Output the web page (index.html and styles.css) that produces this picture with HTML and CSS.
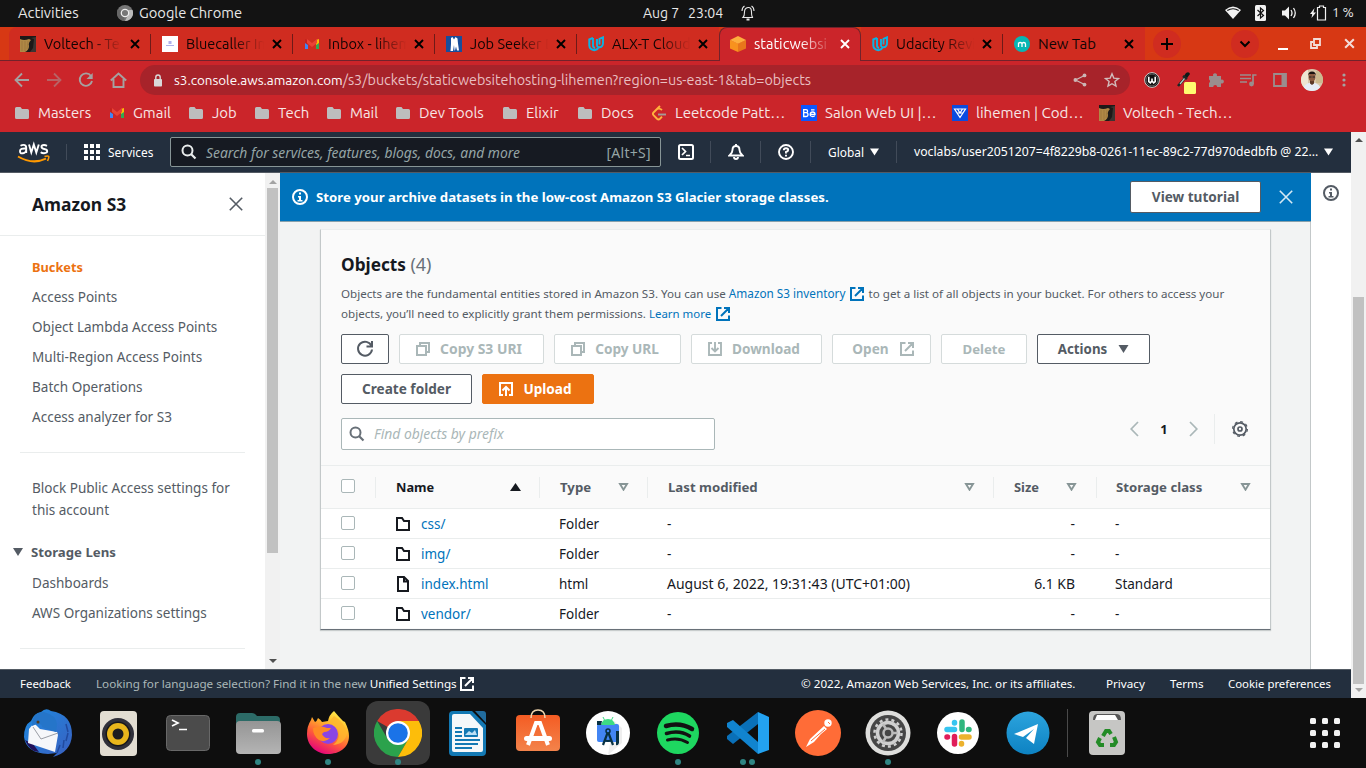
FILE: index.html
```
<!DOCTYPE html>
<html lang="en">
<head>
<meta charset="utf-8">
<title>staticwebsitehosting-lihemen - S3 bucket</title>
<link rel="stylesheet" href="styles.css">
</head>
<body>
<svg class="defs" aria-hidden="true">
  <symbol id="folder" viewBox="0 0 14 14"><path d="M0 2.500Q0 1 1.500 1H5.500L7 3H12.500Q14 3 14 4.500V11.500Q14 13 12.500 13H1.500Q0 13 0 11.500Z" fill="#bdbdbd"/></symbol>
  <symbol id="gmail" viewBox="0 0 16 16"><path d="M1 4v9h3V7z" fill="#4285f4"/><path d="M15 4v9h-3V7z" fill="#34a853"/><path d="M12 4l3-1v4l-3 2z" fill="#fbbc04"/><path d="M1 3l3 1v5L1 7z" fill="#c5221f"/><path d="M3 3l5 4 5-4v4l-5 4-5-4z" fill="#ea4335"/></symbol>
  <symbol id="udacity" viewBox="0 0 16 16"><path d="M5 1.800L1.300 3.500V9.500q.2 4 5 4.800 3-.6 4-2.300" fill="none" stroke="#0cb3e3" stroke-width="2"/><path d="M5 2v7.500q0 2 2 2.500M9 3v6q0 2.500 2.700 2.200Q15 10.800 15 7V1.300L11.500 2.800V8.500" fill="none" stroke="#0cb3e3" stroke-width="1.900"/></symbol>
  <symbol id="volt" viewBox="0 0 16 16"><path d="M0 0h16v16H0z" fill="#1d1918"/><path d="M0 3q4 2 9 0l2 1q-3 3-2 6 0 4-4 6H0z" fill="#b08845"/><path d="M2 5v10M5 5v10M8 5l-1 8" stroke="#94713a" stroke-width=".6"/><path d="M11 2l3 1-1 9-3 4h6V1z" fill="#3b3431"/></symbol>
  <symbol id="x" viewBox="0 0 12 12"><path d="M2 2l8 8M10 2l-8 8" fill="none" stroke="currentColor" stroke-width="1.900"/></symbol>
  <symbol id="bigx" viewBox="0 0 14 14"><path d="M.8.8l12.400 12.400M13.200.8L.8 13.200" fill="none" stroke="currentColor" stroke-width="1.600"/></symbol>
  <symbol id="ext" viewBox="0 0 14 14"><path d="M5.500 1H1v12h12V8.500M8 1h5v5M13 1L5 9" fill="none" stroke="currentColor" stroke-width="2"/></symbol>
  <symbol id="mag" viewBox="0 0 16 16"><circle cx="6.500" cy="6.500" r="5" fill="none" stroke="currentColor" stroke-width="2"/><path d="M10 10l4.500 4.500" stroke="currentColor" stroke-width="2.200"/></symbol>
  <symbol id="info" viewBox="0 0 16 16"><circle cx="8" cy="8" r="7" fill="none" stroke="currentColor" stroke-width="2"/><path d="M7 3.500h2v2H7zM6 7h3v4h1.500v1.500h-5V11H7V8.500H6z" fill="currentColor"/></symbol>
  <symbol id="copy" viewBox="0 0 14 14"><path d="M1 4h9v9H1zM4 4V1h9v9h-3" fill="none" stroke="currentColor" stroke-width="2"/></symbol>
  <symbol id="down" viewBox="0 0 10 8"><path d="M0 0h10L5 8z" fill="currentColor"/></symbol>
  <symbol id="sort" viewBox="0 0 10 8"><path d="M1.500 1h7L5 6.700z" fill="none" stroke="currentColor" stroke-width="1.900"/></symbol>
  <symbol id="dir" viewBox="0 0 14 14"><path d="M1 1h5l2 3h5v9H1z" fill="none" stroke="#16191f" stroke-width="2"/></symbol>
  <symbol id="file" viewBox="0 0 14 16"><path d="M2 1h6l4 4v10H2zM8 1v4.500h4" fill="none" stroke="#16191f" stroke-width="2"/></symbol>
</svg>

<header class="desk">
  <div class="desk-left"><span class="activities">Activities</span>
    <svg width="16" height="16" viewBox="0 0 16 16"><circle cx="8" cy="8" r="8" fill="#777"/><path d="M8 8L1 4A8 8 0 0 0 7 16z" fill="#666"/><path d="M8 5h7.500A8 8 0 0 1 8 16l3-6z" fill="#bbb"/><circle cx="8" cy="8" r="3.700" fill="#777" stroke="#eee" stroke-width="1.300"/></svg>
    <span class="appname">Google Chrome</span></div>
  <div class="clock"><span class="day">Aug 7</span><span>23:04</span>
    <svg width="14" height="16" viewBox="0 0 14 16" fill="none" stroke="#e8e8e8" stroke-width="1.100"><path d="M2 12.500Q3.500 11 3.500 7T7 2.500 10.500 7t1.500 5.500zM1 6Q1 2.500 3.500 1M13 6Q13 2.500 10.500 1"/><path d="M5.500 14.500h3" stroke-width="2"/></svg></div>
  <div class="tray">
    <svg width="16" height="14" viewBox="0 0 16 14"><path d="M0 4Q8-3 16 4L8 13z" fill="#f2f2f2"/><path d="M2.300 4.500Q8 1 13.700 4.500" fill="none" stroke="#131313" stroke-width="1.200"/></svg>
    <svg width="11" height="16" viewBox="0 0 11 16"><rect width="11" height="16" rx="1.500" fill="#f2f2f2"/><path d="M2.500 5l6 5.500-3 2.500V3l3 2.500-6 5.500" fill="none" stroke="#131313" stroke-width="1.200"/></svg>
    <svg width="15" height="14" viewBox="0 0 15 14"><path d="M0 4.500h3L7 .5v13l-4-4H0z" fill="#f2f2f2"/><path d="M9 4q2 3 0 6M11.500 2q3.500 5 0 10" fill="none" stroke="#f2f2f2" stroke-width="1.300"/></svg>
    <svg width="17" height="16" viewBox="0 0 17 16"><path d="M4.500 3L0 9h2.200L1.500 13 6 7.500H3.500z" fill="#f2f2f2"/><path d="M9.500 2.500V1h4v1.500h2v12.500h-8V2.500z" fill="none" stroke="#f2f2f2" stroke-width="1.200"/></svg>
    <span class="pct">1 %</span></div>
</header>

<div class="tabs">
  <div class="tab"><svg><use href="#volt"/></svg><span>Voltech - Te</span><svg class="close"><use href="#x"/></svg></div>
  <div class="tab"><svg viewBox="0 0 16 16"><path d="M0 0h16v16H0z" fill="#fff"/><path d="M6.500 5h3v3h-3zM4 9h8v1H4z" fill="#b0b0ea"/></svg><span>Bluecaller In</span><svg class="close"><use href="#x"/></svg></div>
  <div class="tab"><svg><use href="#gmail"/></svg><span>Inbox - lihem</span><svg class="close"><use href="#x"/></svg></div>
  <div class="tab"><svg viewBox="0 0 16 16"><path d="M0 0h16v16H0z" fill="#174d9b"/><path d="M5 2l1.500-1L8 3.500 9.500 1l2 1.500.5 5 1 7h-2l-1-4-1 4H8.500L8 9l-1 6H4.500l.5-7z" fill="#fff"/></svg><span>Job Seeker D</span><svg class="close"><use href="#x"/></svg></div>
  <div class="tab last"><svg><use href="#udacity"/></svg><span>ALX-T Cloud</span><svg class="close"><use href="#x"/></svg></div>
  <div class="tab active"><svg viewBox="0 0 16 16"><path d="M0 4l8 3.500V16l-8-3.500z" fill="#f8921e"/><path d="M16 4L8 7.500V16l8-3.500z" fill="#e8761b"/><path d="M8 0l8 4-8 3.800L0 4z" fill="#fdae3d"/></svg><span>staticwebsi</span><svg class="close"><use href="#x"/></svg></div>
  <div class="tab"><svg><use href="#udacity"/></svg><span>Udacity Revi</span><svg class="close"><use href="#x"/></svg></div>
  <div class="tab last short"><svg viewBox="0 0 16 16"><circle cx="8" cy="8" r="8" fill="#08b6b4"/><path d="M4.500 11V6.500M4.500 8q0-1.500 1.700-1.500T8 8v3M8 8q0-1.500 1.700-1.500T11.500 8v3" fill="none" stroke="#fff" stroke-width="1.300"/></svg><span>New Tab</span><svg class="close"><use href="#x"/></svg></div>
  <div class="round plus"><svg width="14" height="14" viewBox="0 0 14 14"><path d="M7 1v12M1 7h12" stroke="#000" stroke-width="1.900"/></svg></div>
  <div class="round chev"><svg width="12" height="8" viewBox="0 0 12 8"><path d="M1.500 1.500L6 6l4.500-4.500" fill="none" stroke="#000" stroke-width="2"/></svg></div>
  <div class="wm">
    <svg width="10" height="12" viewBox="0 0 10 12"><path d="M0 11h10" stroke="#fff" stroke-width="2"/></svg>
    <svg width="11" height="11" viewBox="0 0 11 11"><path d="M4 1h6v6H4zM3 4H1v6h6V8" fill="none" stroke="#f4dcd8" stroke-width="1.800"/></svg>
    <svg width="13" height="13"><use href="#x"/></svg></div>
</div>

<div class="toolbar">
  <div class="cell"><svg width="16" height="16" viewBox="0 0 16 16" fill="none" stroke="#a5a1a1" stroke-width="1.800"><path d="M15 8H2M8 1.500L1.500 8 8 14.500"/></svg></div>
  <div class="cell dim"><svg width="16" height="16" viewBox="0 0 16 16" fill="none" stroke="#a5a1a1" stroke-width="1.800"><path d="M1 8h13M8 1.500L14.500 8 8 14.500"/></svg></div>
  <div class="cell"><svg width="16" height="16" viewBox="0 0 16 16"><path d="M13 4A6.200 6.200 0 1 0 14 9" fill="none" stroke="#a5a1a1" stroke-width="1.900"/><path d="M14.700 1v6H8.500z" fill="#a5a1a1"/></svg></div>
  <div class="cell"><svg width="17" height="16" viewBox="0 0 17 16" fill="none" stroke="#a5a1a1" stroke-width="1.900"><path d="M.8 8.500L8.500 1.500 16.200 8.500M3.500 7v8h10V7"/></svg></div>
  <div class="omni">
    <svg width="10" height="13" viewBox="0 0 10 13"><rect x="1" y="5" width="8" height="7.500" rx=".8" fill="#d9d9d9"/><path d="M2.800 5V3.200a2.200 2.200 0 0 1 4.400 0V5" fill="none" stroke="#d9d9d9" stroke-width="1.400"/></svg>
    <span class="host">s3.console.aws.amazon.com</span><span class="path">/s3/buckets/staticwebsitehosting-lihemen?region=us-east-1&amp;tab=objects</span>
    <svg class="share" width="14" height="14" viewBox="0 0 14 14"><path d="M11.500 2.500L2.500 7l9 4.500" fill="none" stroke="#ccb5b5" stroke-width="1.300"/><g fill="#ccb5b5"><circle cx="11.500" cy="2.400" r="1.900"/><circle cx="2.400" cy="7" r="1.900"/><circle cx="11.500" cy="11.600" r="1.900"/></g></svg>
    <svg width="16" height="16" viewBox="0 0 16 16"><path d="M8 1.800l1.800 4.300 4.700.4-3.600 3 1.100 4.600L8 11.700l-4 2.400 1.100-4.600-3.600-3 4.700-.4z" fill="none" stroke="#d2bcbc" stroke-width="1.400"/></svg>
  </div>
  <div class="cell"><svg width="16" height="16" viewBox="0 0 16 16"><circle cx="8" cy="8" r="7.400" fill="#111" stroke="#ddd" stroke-width=".9"/><circle cx="8" cy="8" r="5.900" fill="none" stroke="#888" stroke-width=".6"/><path d="M4.800 4.800v4.700l1.600 1.300L8 9V6.500 9l1.600 1.800 1.600-1.300V4.800" fill="none" stroke="#fff" stroke-width="1.600"/></svg></div>
  <div class="cell"><svg class="dropper" width="20" height="24" viewBox="0 0 20 24"><path d="M10 1q3-2 4 1l-3 4-3-2z" fill="#0d1a18"/><path d="M7 4l4 3M9 6l-7 8" stroke="#1c2624" stroke-width="2.600"/><path d="M8.500 6.500L4 12" stroke="#b4c7c1" stroke-width="1.200"/><rect x="8" y="10" width="12" height="12" rx="1.500" fill="#fffa70"/></svg></div>
  <div class="cell"><svg width="16" height="16" viewBox="0 0 16 16"><path d="M1 4h4.200a2 2 0 1 1 3.600 0H13v3.700a2 2 0 1 1 0 3.600V15H9.200a2 2 0 0 0-4 0H1v-4a2 2 0 0 0 0-3.500z" fill="#9a8d8d"/></svg></div>
  <div class="cell"><svg width="17" height="14" viewBox="0 0 17 14"><path d="M0 2h11M0 5.500h11M0 9h7" stroke="#9a8d8d" stroke-width="1.700"/><path d="M13 11V2h3.500" fill="none" stroke="#9a8d8d" stroke-width="1.700"/><circle cx="11.500" cy="11" r="2.400" fill="#9a8d8d"/></svg></div>
  <div class="cell"><svg width="14" height="14" viewBox="0 0 14 14"><path d="M1 1h12v12H1z" fill="none" stroke="#9a8d8d" stroke-width="1.800"/><path d="M8.500 1H13v12H8.500z" fill="#9a8d8d"/></svg></div>
  <div class="cell"><svg width="22" height="22" viewBox="0 0 22 22"><clipPath id="av"><circle cx="11" cy="11" r="11"/></clipPath><g clip-path="url(#av)"><path d="M0 0h22v22H0z" fill="#d8c6aa"/><path d="M0 0h7v22H0z" fill="#eee5d2"/><path d="M15 2h7v12h-7z" fill="#cbb98f"/><path d="M2 22q0-8 9-8.500 9 .5 9 8.500z" fill="#e6edf8"/><path d="M9 11h4v3.500l-2 1.500-2-1.500z" fill="#5c3828"/><ellipse cx="11" cy="8" rx="3.400" ry="4.300" fill="#8a5a40"/><path d="M7 7q0-4.500 4-4.500t4 4.500l-1-2H8z" fill="#181210"/><path d="M8 8h2.500M11.500 8H14" stroke="#222" stroke-width="1"/></g></svg></div>
  <div class="cell"><svg width="4" height="16" viewBox="0 0 4 16" fill="#a5a1a1"><circle cx="2" cy="3" r="1.600"/><circle cx="2" cy="8" r="1.600"/><circle cx="2" cy="13" r="1.600"/></svg></div>
</div>

<nav class="marks">
  <a><svg><use href="#folder"/></svg>Masters</a>
  <a><svg><use href="#gmail"/></svg>Gmail</a>
  <a><svg><use href="#folder"/></svg>Job</a>
  <a><svg><use href="#folder"/></svg>Tech</a>
  <a><svg><use href="#folder"/></svg>Mail</a>
  <a><svg><use href="#folder"/></svg>Dev Tools</a>
  <a><svg><use href="#folder"/></svg>Elixir</a>
  <a><svg><use href="#folder"/></svg>Docs</a>
  <a class="wide"><svg viewBox="0 0 16 16" fill="none" stroke-width="1.900"><path d="M9 1L2.500 7.500q-1.200 1.300 0 2.600L6 13.700q1.500 1.400 3 0l2-2M5.500 4.500Q8 2.500 11 5" stroke="#ffb13d"/><path d="M7 9.500h8" stroke="#a49a96"/></svg>Leetcode Patt…</a>
  <a class="wide"><svg viewBox="0 0 16 16"><path d="M0 0h16v16H0z" fill="#0a57ff"/><path d="M2.700 4.700H5q1.600 0 1.600 1.500T5 7.700H2.700 5q2 0 2 1.900t-2 1.900H2.700zM9 9.300h5q0-2.300-2.300-2.300T9.200 9.200t2.500 2.300q1.600 0 2.200-1M10 4.900h3.500" fill="none" stroke="#fff" stroke-width="1.300"/></svg>Salon Web UI |…</a>
  <a class="wide"><svg viewBox="0 0 16 16"><path d="M0 0h16v16H0z" fill="#0b4be0"/><path d="M2.500 4h11L8 12.500zM5.500 4L8 8l2.500-4M5 8h6" fill="none" stroke="#fff" stroke-width="1.200"/></svg>lihemen | Cod…</a>
  <a class="wide"><svg><use href="#volt"/></svg>Voltech - Tech…</a>
</nav>

<div class="page">
  <div class="console">
    <header class="nav">
      <svg class="aws" width="34" height="24" viewBox="0 0 34 24"><g fill="none" stroke="#fff" stroke-width="1.900"><path d="M3.500 4.800q1.500-.9 3-.9 2.700 0 2.700 2.600V12M9 7.500Q3 7 3 10t2.800 2.200Q8.200 12.200 9 10"/><path d="M12 3.500L14.300 11.500l2.500-8 2.500 8 2.500-8"/><path d="M30 4.800q-1.500-.8-3-.8-2.500 0-2.500 1.800t2.700 2.200q3 .5 3 2.200T27 12.200q-2 0-3.300-1"/></g><path d="M1 15.500q14.500 8.500 28 2.200" fill="none" stroke="#f90" stroke-width="2"/><path d="M27.500 15.500q3.700-.8 4.200 0t-1.200 4.500" fill="none" stroke="#f90" stroke-width="1.600"/></svg>
      <svg class="services-icon" width="16" height="16" viewBox="0 0 16 16" fill="#fff"><path d="M0 0h4v4H0zM6 0h4v4H6zM12 0h4v4h-4zM0 6h4v4H0zM6 6h4v4H6zM12 6h4v4h-4zM0 12h4v4H0zM6 12h4v4H6zM12 12h4v4h-4z"/></svg>
      <span class="services">Services</span>
      <div class="search"><svg width="16" height="16"><use href="#mag"/></svg><i>Search for services, features, blogs, docs, and more</i><span>[Alt+S]</span></div>
      <div class="ncell"><svg width="16" height="16" viewBox="0 0 16 16" fill="none" stroke="#fff" stroke-width="2"><rect x="1" y="1" width="14" height="14" rx="1.500"/><path d="M4 4l3.500 3.500L4 11M8 11.500h4" stroke-width="1.700"/></svg></div>
      <div class="ncell"><svg width="16" height="16" viewBox="0 0 16 16" fill="none" stroke="#fff" stroke-width="1.900"><path d="M1.500 11.500Q4.500 9 4.500 6 4.500 2 8 2t3.500 4q0 3 3 5.500zM8 0v2"/><path d="M6 13q0 2 2 2t2-2"/></svg></div>
      <div class="ncell"><svg width="16" height="16" viewBox="0 0 16 16" fill="none" stroke="#fff" stroke-width="1.900"><circle cx="8" cy="8" r="7"/><path d="M5.800 6.300Q5.800 4.200 8 4.200t2.200 1.900Q10.200 7.300 8 8v1.500M8 10.700v1.800"/></svg></div>
      <div class="global"><span>Global</span><svg width="9" height="8"><use href="#down"/></svg></div>
      <div class="account"><span>voclabs/user2051207=4f8229b8-0261-11ec-89c2-77d970dedbfb @ 22...</span><svg width="9" height="8"><use href="#down"/></svg></div>
    </header>

    <div class="work">
      <aside class="side">
        <div class="side-body">
          <div class="side-title"><h2>Amazon S3</h2><svg width="14" height="14"><use href="#bigx"/></svg></div>
          <ul class="links">
            <li class="on">Buckets</li><li>Access Points</li><li>Object Lambda Access Points</li><li>Multi-Region Access Points</li><li>Batch Operations</li><li>Access analyzer for S3</li>
          </ul>
          <div class="block">Block Public Access settings for<br>this account</div>
          <div class="lens"><svg width="10" height="8"><use href="#down"/></svg>Storage Lens</div>
          <ul class="sub"><li>Dashboards</li><li>AWS Organizations settings</li></ul>
          <div class="rule"></div>
        </div>
        <div class="sbar"><svg width="8" height="4" viewBox="0 0 8 4"><path d="M0 4l4-4 4 4z" fill="#a3a3a3"/></svg><div class="thumb"></div><svg width="8" height="4" viewBox="0 0 8 4"><path d="M0 0h8L4 4z" fill="#505050"/></svg></div>
      </aside>

      <main class="main">
        <div class="banner"><svg width="16" height="16"><use href="#info"/></svg><b>Store your archive datasets in the low-cost Amazon S3 Glacier storage classes.</b><span class="btn tutorial">View tutorial</span><svg class="bx" width="14" height="14"><use href="#bigx"/></svg></div>
        <section class="card">
          <div class="card-head">
            <h1>Objects <span>(4)</span></h1>
            <p>Objects are the fundamental entities stored in Amazon S3. You can use <a>Amazon S3 inventory <svg width="14" height="14"><use href="#ext"/></svg></a> to get a list of all objects in your bucket. For others to access your<br>objects, you’ll need to explicitly grant them permissions. <a class="more">Learn more <svg width="14" height="14"><use href="#ext"/></svg></a></p>
            <div class="btns">
              <span class="btn w48"><svg width="18" height="18" viewBox="0 0 18 18"><path d="M15.500 6A7 7 0 1 0 16 9.500" fill="none" stroke="#545b64" stroke-width="2"/><path d="M16 1v5.500h-5.500" fill="none" stroke="#545b64" stroke-width="2"/></svg></span>
              <span class="btn off ico w145 wider"><svg width="14" height="14"><use href="#copy"/></svg>Copy S3 URI</span>
              <span class="btn off ico w127"><svg width="14" height="14"><use href="#copy"/></svg>Copy URL</span>
              <span class="btn off ico w131"><svg width="14" height="14" viewBox="0 0 14 14"><path d="M4 1H1v12h12V1h-3M7 0v9M3.500 6L7 9.500 10.500 6" fill="none" stroke="currentColor" stroke-width="1.900"/></svg>Download</span>
              <span class="btn off w99 open">Open<svg width="14" height="14"><use href="#ext"/></svg></span>
              <span class="btn off w86">Delete</span>
              <span class="btn w113 open">Actions<svg width="11" height="8"><use href="#down"/></svg></span>
              <span class="btn w131">Create folder</span>
              <span class="btn ico up w112"><svg width="14" height="14" viewBox="0 0 14 14"><path d="M4 13H1V1h12v12h-3M7 14V5M3.500 8.500L7 5l3.500 3.500" fill="none" stroke="#fff" stroke-width="2"/></svg>Upload</span>
            </div>
            <div class="filter">
              <div class="find"><svg width="16" height="16"><use href="#mag"/></svg><i>Find objects by prefix</i></div>
              <div class="pager">
                <svg width="9" height="16" viewBox="0 0 9 16"><path d="M8 1L1.200 8 8 15" fill="none" stroke="#aab7b8" stroke-width="1.700"/></svg><b>1</b>
                <svg width="9" height="16" viewBox="0 0 9 16"><path d="M1 1l6.800 7L1 15" fill="none" stroke="#aab7b8" stroke-width="1.700"/></svg>
                <span class="gear"><svg width="16" height="16" viewBox="0 0 16 16" fill="none" stroke="#545b64"><circle cx="8" cy="8" r="6.200" stroke-width="1.700"/><circle cx="8" cy="8" r="7.400" stroke-width="1.200" stroke-dasharray="2.900 2.911"/><circle cx="8" cy="8" r="2" stroke-width="1.700"/></svg></span>
              </div>
            </div>
          </div>
          <div class="row head"><div class="c0"><i class="box"></i></div><div class="sorted">Name<svg width="11" height="8" viewBox="0 0 11 8"><path d="M0 8h11L5.500 0z" fill="#16191f"/></svg></div><div>Type<svg><use href="#sort"/></svg></div><div>Last modified<svg><use href="#sort"/></svg></div><div class="sz">Size<svg><use href="#sort"/></svg></div><div class="st">Storage class<svg><use href="#sort"/></svg></div></div>
          <div class="row"><div class="c0"><i class="box"></i></div><div><svg><use href="#dir"/></svg><a>css/</a></div><div class="d">Folder</div><div class="d">-</div><div class="r">-</div><div class="s">-</div></div>
          <div class="row"><div class="c0"><i class="box"></i></div><div><svg><use href="#dir"/></svg><a>img/</a></div><div class="d">Folder</div><div class="d">-</div><div class="r">-</div><div class="s">-</div></div>
          <div class="row"><div class="c0"><i class="box"></i></div><div><svg class="tall"><use href="#file"/></svg><a>index.html</a></div><div class="d">html</div><div class="d date">August 6, 2022, 19:31:43 (UTC+01:00)</div><div class="r">6.1 KB</div><div class="s">Standard</div></div>
          <div class="row"><div class="c0"><i class="box"></i></div><div><svg><use href="#dir"/></svg><a>vendor/</a></div><div class="d">Folder</div><div class="d">-</div><div class="r">-</div><div class="s">-</div></div>
        </section>
      </main>
      <div class="help"><svg width="16" height="16"><use href="#info"/></svg></div>
    </div>

    <footer class="foot">
      <span class="fb">Feedback</span><span class="lang">Looking for language selection? Find it in the new <em>Unified Settings</em></span><svg width="14" height="14"><use href="#ext"/></svg>
      <span class="copyr">© 2022, Amazon Web Services, Inc. or its affiliates.</span><span class="pv">Privacy</span><span class="tm">Terms</span><span>Cookie preferences</span>
    </footer>
  </div>
  <div class="sbar pagebar"><svg width="8" height="4" viewBox="0 0 8 4"><path d="M0 4l4-4 4 4z" fill="#505050"/></svg><div class="thumb"></div><svg width="8" height="4" viewBox="0 0 8 4"><path d="M0 0h8L4 4z" fill="#a3a3a3"/></svg></div>
</div>

<div class="dock">
  <div class="app"><svg viewBox="0 0 48 48"><defs><linearGradient id="tb" x1="0" y1="0" x2="1" y2="1"><stop offset="0" stop-color="#1d8ae0"/><stop offset="1" stop-color="#3a5fc0"/></linearGradient></defs><path d="M17 3Q22-2 27 2q21 3 21 24-1 17-19 22l4-4-9 1Q2 44 0 28q0-12 7-16Q10 4 17 3z" fill="url(#tb)"/><path d="M1 31q5 12 14 12l-6-8z" fill="#21115a"/><path d="M5 20l5-6 6 6 17 3 1 3-3 17L4 34z" fill="#f6f7fa"/><path d="M9 18l8 12 17-6" fill="none" stroke="#9a9da5" stroke-width="1"/><path d="M8 15Q9 3 20 3q12 3 13 12l-1 8-14-5q0-3-3-3t-7 2z" fill="#2575c9"/><circle cx="14" cy="13" r="1.500" fill="#523c20"/><path d="M42 15l2 8M44 24l-2 8M40 31l-1 8M36 36l-3 8" fill="none" stroke="#214a9e" stroke-width="1.500"/></svg></div>
  <div class="app"><svg viewBox="0 0 48 48"><rect x="6" y="2" width="37" height="45" rx="4" fill="#e2ddd2"/><circle cx="24" cy="25" r="16" fill="#30303a"/><circle cx="24" cy="25" r="12.500" fill="#17171b"/><circle cx="24" cy="25" r="11" fill="#e9b61c"/><circle cx="24" cy="25" r="5.500" fill="#1d1d1f"/></svg></div>
  <div class="app"><svg viewBox="0 0 48 48"><rect x="2.500" y="6.500" width="43" height="35" rx="4" fill="#4b4b4b" stroke="#686868"/><path d="M8 11l6 3-6 3M15 20.500h8" fill="none" stroke="#fff" stroke-width="1.700"/></svg></div>
  <div class="app"><svg viewBox="0 0 48 48"><defs><linearGradient id="fg" x1="0" y1="0" x2="0" y2="1"><stop offset="0" stop-color="#959595"/><stop offset="1" stop-color="#b4b4b4"/></linearGradient></defs><path d="M2 8q0-4 4-4h12q3 0 5 3h19q4 0 4 4v10H2z" fill="#2c6b67"/><rect x="2" y="12" width="45" height="33" rx="4" fill="url(#fg)"/><rect x="18" y="20" width="12" height="3.500" rx="1.500" fill="#fff"/></svg><i class="dot"></i></div>
  <div class="app"><svg viewBox="0 0 48 48"><defs><linearGradient id="ff" x1=".8" y1="0" x2=".3" y2="1"><stop offset="0" stop-color="#fff44f"/><stop offset=".35" stop-color="#ffb52a"/><stop offset=".65" stop-color="#ff5b3a"/><stop offset="1" stop-color="#e3007e"/></linearGradient></defs><path d="M30 2q4 5 9 10l2 1q4 8 4 14c0 12-10 18-21 18S3 37 3 25q0-8 4-14l1-3 3 5q2-1 3-4 3 2 4 4l6-1q1-6 6-10z" fill="url(#ff)"/><circle cx="24" cy="25" r="10" fill="#8a45e5"/><path d="M9 19q8-3 14 0h4q-2 4-7 4l-2 2q2 5 8 4-5 5-11 2-6-4-6-12z" fill="#ff8a25"/><path d="M24 14q10 1 11 9 1 8-6 13 13-1 14-13Q39 12 30 7z" fill="#ffb62d" opacity=".8"/></svg><i class="dot"></i></div>
  <div class="app sel"><svg viewBox="0 0 48 48"><path d="M24 24L3.200 12A24 24 0 0 1 44.800 12z" fill="#db3a2f"/><path d="M3.200 12A24 24 0 0 0 24 48l10.400-18H13.600z" fill="#2ba24c"/><path d="M44.800 12A24 24 0 0 1 24 48l10.400-18L34 12z" fill="#fdbd0a"/><path d="M24 12h20.800L36 24z" fill="#fdbd0a"/><circle cx="24" cy="24" r="12" fill="#fff"/><circle cx="24" cy="24" r="9.800" fill="#1a73e8"/></svg><i class="dot"></i></div>
  <div class="app"><svg viewBox="0 0 48 48"><path d="M9 2h19l14 14v27q0 4-4 4H9q-4 0-4-4V6q0-4 4-4z" fill="#1379b4"/><path d="M10 5h16l13 14v22q0 2-2 2H10q-2 0-2-2V7q0-2 2-2z" fill="#f5f8fa"/><path d="M31 2h8q3 0 3 3v9z" fill="#216c9e"/><path d="M11 19h7M11 23h7M11 27h7M11 31h25M11 35h23M11 39h17" stroke="#1379b4" stroke-width="2"/><rect x="20" y="19" width="14" height="9" rx="1" fill="#1379b4"/><path d="M21 26l4-4 3 2 3-3 2 5z" fill="#bce0f5"/></svg></div>
  <div class="app"><svg viewBox="0 0 48 48"><defs><linearGradient id="sw" x1="0" y1="0" x2="0" y2="1"><stop offset="0" stop-color="#f45c23"/><stop offset="1" stop-color="#f3834b"/></linearGradient></defs><rect x="2" y="6" width="44" height="36" rx="4" fill="url(#sw)"/><path d="M17 9q0-8 7-8t7 8" fill="none" stroke="#f2d6ae" stroke-width="1.500"/><path d="M14 36l8-22h4l8 22" fill="none" stroke="#fff" stroke-width="4"/><rect x="10" y="27" width="28" height="5" rx="2.500" fill="#fff"/></svg></div>
  <div class="app"><svg viewBox="0 0 48 48"><circle cx="24" cy="24" r="22" fill="#fff"/><path d="M24 46l14-12V19L30 12z" fill="#eee"/><rect x="13" y="15" width="22" height="18" rx="2" fill="#4285f4"/><path d="M17 16q1-6 7-6t7 6z" fill="#3ddc84"/><path d="M19 8l2 4M29 8l-2 4" stroke="#3ddc84" stroke-width="1"/><circle cx="24" cy="22" r="2" fill="none" stroke="#073042" stroke-width="1.500"/><path d="M23.500 24l-4.500 12M24.500 24l4.500 12M20 31q4 2 8 0" fill="none" stroke="#073042" stroke-width="2.200"/><path d="M32 22h3v12q-1 3-3 2zM13 12h5l-1 4h-4z" fill="#073042"/></svg></div>
  <div class="app"><svg viewBox="0 0 48 48"><circle cx="24" cy="24" r="21" fill="#1ed760"/><g fill="none" stroke="#121212" stroke-linecap="round"><path d="M12 17q14-4 26 3" stroke-width="4.500"/><path d="M12.500 24.500q13-4 23 2.500" stroke-width="3.600"/><path d="M13.500 31q11-3 20 2.500" stroke-width="3"/></g></svg><i class="dot"></i></div>
  <div class="app"><svg viewBox="0 0 48 48"><path d="M34 3l11 5v33l-11 4z" fill="#23a2f1"/><path d="M34 3v12L9 35l-6-5v-3z" fill="#0a70b8"/><path d="M3 14l6-3 25 22v12L3 18z" fill="#1184cf"/></svg><i class="dot"></i><i class="dot two"></i></div>
  <div class="app"><svg viewBox="0 0 48 48"><circle cx="24" cy="24" r="23" fill="#ff6c37"/><circle cx="34" cy="14" r="3.700" fill="#fff"/><path d="M30 17l3 3-6 5-7 8-8 5 4-8z" fill="#fff"/><path d="M31 20L17 32M34 13l2 2" stroke="#ff6c37" stroke-width="1"/></svg></div>
  <div class="app"><svg viewBox="0 0 48 48"><circle cx="24" cy="24" r="22.500" fill="#dededc"/><circle cx="24" cy="24" r="18" fill="#464646"/><circle cx="24" cy="24" r="10.500" fill="none" stroke="#cfcfcf" stroke-width="3.500"/><circle cx="24" cy="24" r="13.500" fill="none" stroke="#cfcfcf" stroke-width="2.500" stroke-dasharray="3 3.060"/><circle cx="24" cy="24" r="4.500" fill="none" stroke="#bbb" stroke-width="2.500"/><path d="M28 24h6M22 20l-3-5M22 28l-3 5" stroke="#bbb" stroke-width="2.500"/></svg><i class="dot"></i></div>
  <div class="app"><svg viewBox="0 0 48 48"><circle cx="24" cy="24" r="21" fill="#fff"/><g stroke-width="5.500" stroke-linecap="round"><path d="M13 20.500h7.500M20.500 13.500v.5" stroke="#36c5f0"/><path d="M28 13v7.500M34.500 20.500h.5" stroke="#2eb67d"/><path d="M27.500 28H35M27.500 34.500v.5" stroke="#ecb22e"/><path d="M20.500 27.500V35M13 28h.5" stroke="#e01e5a"/></g></svg></div>
  <div class="app"><svg viewBox="0 0 48 48"><defs><linearGradient id="tg" x1="0" y1="0" x2="0" y2="1"><stop offset="0" stop-color="#2ca4de"/><stop offset="1" stop-color="#0d82c2"/></linearGradient></defs><circle cx="24" cy="24" r="21.500" fill="url(#tg)"/><path d="M10 25l24-10-4 20-8-6 8-9-11 8z" fill="#fff"/></svg></div>
  <div class="dsep"></div>
  <div class="app"><svg viewBox="0 0 48 48"><rect x="6" y="2" width="36" height="44" rx="4" fill="#c6c6c4"/><path d="M10 11q0-6 4-6h20q4 0 4 6z" fill="#565656"/><path d="M12 11l2-5h18l3 5z" fill="#fff"/><g fill="none" stroke="#238b27" stroke-width="4"><path d="M20 27l3-5h3l2 3M31 28l2 5-2 3h-4M21 36h-4l-2-3 2-4"/></g></svg></div>
  <div class="grid9"><i></i><i></i><i></i><i></i><i></i><i></i><i></i><i></i><i></i></div>
</div>
</body>
</html>
```
FILE: styles.css
```
* { box-sizing: border-box; }
body { margin: 0; width: 1366px; height: 768px; overflow: hidden; display: flex; flex-direction: column; font-family: "Noto Sans", "Open Sans", sans-serif; font-size: 13.600px; line-height: 20px; color: #16191f; white-space: nowrap; }
svg { flex: none; display: block; }
.defs { display: none; }
h1, h2, p, ul { margin: 0; padding: 0; }
li { list-style: none; }

/* desktop bar */
.desk { height: 27px; background: #131313; color: #e8e8e8; display: grid; grid-template-columns: 643px 1fr auto; align-items: center; font-family: Ubuntu, "Noto Sans", sans-serif; font-size: 14.100px; }
.desk > div { display: flex; align-items: center; margin-top: -1px; }
.desk-left { padding-left: 18px; }
.activities { width: 99px; font-size: 14.800px; }
.appname { margin-left: 6px; font-size: 14.700px; }
.day { width: 45px; font-size: 14px; }
.clock svg { margin-left: 18px; }
.tray { padding-right: 13px; }
.tray svg:nth-child(2) { margin-left: 14px; }
.tray svg:nth-child(3) { margin-left: 16px; }
.tray svg:nth-child(4) { margin-left: 13px; }
.pct { margin-left: 5px; font-size: 13.400px; width: 21px; }

/* tab strip */
.tabs { height: 34px; background: #d73814; border-bottom: 1px solid #71222b; display: flex; padding-left: 9px; font-family: Ubuntu, "Noto Sans", sans-serif; font-size: 14.500px; color: #100404; }
.tab { width: 142px; height: 33px; background: #d02c20; padding-left: 11px; display: flex; align-items: center; position: relative; }
.tab:first-child { border-radius: 8px 0 0 0; }
.tab > svg { width: 16px; height: 16px; }
.tab > span { width: 80px; margin-left: 8px; overflow: hidden; -webkit-mask-image: linear-gradient(90deg, #000 58%, transparent 98%); mask-image: linear-gradient(90deg, #000 58%, transparent 98%); }
.tab.short > span { font-size: 14.900px; -webkit-mask-image: none; mask-image: none; }
.tab > .close { width: 12px; height: 12px; margin-left: 5px; color: #000; }
.tab::after { content: ""; position: absolute; right: 0; top: 7px; width: 1px; height: 20px; background: #6e1a18; }
.tab.last::after, .tab.active::after { display: none; }
.tab.active { height: 34px; background: #cb252a; color: #fff; border: 1px solid #71222b; border-bottom: 0; border-radius: 8px 8px 0 0; padding-left: 10px; padding-bottom: 1px; }
.tab.active .close { color: #fff; }
.round { width: 28px; height: 28px; margin-top: 3px; border-radius: 50%; background: #d02c20; display: flex; align-items: center; justify-content: center; }
.plus { margin-left: 8px; }
.chev { margin-left: 50px; }
.wm { display: flex; align-items: center; margin-left: 19px; color: #f4dcd8; }
.wm svg:nth-child(2) { margin-left: 22px; }
.wm svg:nth-child(3) { margin-left: 22px; }

/* address bar */
.toolbar { height: 38px; background: #cb252a; display: flex; align-items: center; padding-left: 6px; }
.cell { width: 32px; height: 32px; display: flex; align-items: center; justify-content: center; }
.dim { opacity: .5; }
.omni { width: 990px; height: 30px; margin: 0 6px; border-radius: 15px; background: #a7232a; display: flex; align-items: center; padding: 0 10px 0 13px; font-family: Ubuntu, "Noto Sans", sans-serif; }
.host { color: #fff; font-size: 13.450px; margin-left: 11px; }
.path { color: #e9bfc1; font-size: 14.350px; }
.share { margin-left: auto; margin-right: 17px; }
.dropper { margin: 8px 0 0 4px; }

/* bookmarks */
.marks { height: 33px; background: #cb252a; display: flex; padding: 0 0 6px 15px; font-family: Ubuntu, "Noto Sans", sans-serif; font-size: 14.900px; color: #f7e6e6; }
.marks a { display: flex; align-items: center; }
.marks svg { width: 14px; height: 14px; margin-right: 9px; }
.marks a:nth-child(2) svg { width: 16px; height: 16px; margin-right: 8px; }
.marks a:nth-child(1) { width: 94px; }
.marks a:nth-child(2) { width: 80px; }
.marks a:nth-child(3) { width: 66px; }
.marks a:nth-child(4) { width: 72px; }
.marks a:nth-child(5) { width: 69px; }
.marks a:nth-child(6) { width: 107px; }
.marks a:nth-child(7) { width: 75px; }
.marks a:nth-child(8) { width: 73px; }
.marks .wide { width: 150px; font-size: 15.100px; }
.marks .wide svg { width: 16px; height: 16px; margin-right: 8px; }
.marks a:nth-child(10) { width: 151px; }
.marks a:nth-child(11) { width: 147px; }

/* console header */
.page { flex: none; height: 566px; display: flex; }
.console { width: 1351px; display: flex; flex-direction: column; }
.nav { height: 41px; background: #232f3e; border-bottom: 1px solid #545b64; display: flex; align-items: center; padding-left: 17px; color: #fff; font-size: 11.900px; }
.aws { margin-top: 2px; }
.services-icon { box-sizing: content-box; margin-left: 15px; padding-left: 17px; border-left: 1px solid #414b59; }
.services { width: 62px; margin-left: 8px; }
.search { width: 491px; height: 30px; background: #161a22; border: 1px solid #879596; border-radius: 2px; display: flex; align-items: center; padding: 0 9px 0 10px; color: #95a5a6; font-size: 13.880px; }
.search svg { color: #eaeded; }
.search i { margin: 2px 0 0 9px; }
.search span { margin: 2px 0 0 auto; font-size: 14px; letter-spacing: .3px; }
.ncell { width: 50px; height: 22px; border-right: 1px solid #414b59; display: flex; align-items: center; justify-content: center; }
.global { width: 86px; height: 22px; border-right: 1px solid #414b59; display: flex; align-items: center; padding-left: 17px; }
.global svg { margin-left: 6px; }
.account { display: flex; align-items: center; margin-left: 17px; font-size: 12.220px; }
.account svg { margin-left: 6px; }

/* side navigation */
.work { flex: 1; display: flex; min-height: 0; }
.side { width: 281px; display: flex; border-right: 1px solid #c3c8c9; background: #fff; }
.side-body { width: 265px; color: #545b64; font-size: 13.540px; }
.side-title { height: 63px; border-bottom: 1px solid #eaeded; display: flex; align-items: center; justify-content: space-between; padding: 0 22px 0 32px; color: #545b64; }
h2 { font-size: 17.400px; color: #16191f; }
.links { margin: 0 20px; padding: 16px 0 20px 12px; border-bottom: 1px solid #eaeded; }
.links li, .sub li { height: 30px; line-height: 30px; }
.links .on { color: #ec7211; font-weight: bold; font-size: 12.800px; }
.block { margin: 24px 0 0 32px; line-height: 22px; }
.lens { display: flex; align-items: center; margin: 21px 0 6px 13px; font-weight: bold; font-size: 13.200px; }
.lens svg { margin-right: 8px; }
.sub { padding-left: 32px; }
.rule { margin: 20px 20px 0; height: 1px; background: #eaeded; }
.sbar { width: 15px; background: #f1f1f1; display: flex; flex-direction: column; align-items: center; padding: 7px 0 6px; }
.thumb { width: 11px; height: 365px; margin: 4px 0 auto; background: #c1c1c1; }
.pagebar { padding: 6px 0; }
.pagebar .thumb { height: 387px; margin: auto 0 4px; }

/* main area */
.main { width: 1031px; background: #f2f3f3; border-right: 1px solid #c3c8c9; margin-left: -1px; display: flex; flex-direction: column; }
.banner { height: 49px; background: #0073bb; border-bottom: 1px solid #87a0ab; margin-right: -1px; display: flex; align-items: center; color: #fff; padding: 0 18px 0 12px; }
.banner b { margin-left: 8px; font-size: 13.220px; }
.btn { height: 30px; border: 1px solid #545b64; border-radius: 2px; background: #fff; color: #545b64; font-weight: bold; font-size: 13.600px; display: flex; align-items: center; justify-content: center; }
.tutorial { width: 131px; height: 32px; margin: 0 18px 0 auto; }
.banner .bx { color: #d6eaf5; }
.card { width: 951px; height: 401px; margin: 7px 0 0 40px; background: #fafafa; border: 1px solid #c3c8c9; border-top-color: #eaeded; border-bottom-color: #687078; box-shadow: 0 1px 1px #c8cccc; }
.card-head { height: 235px; padding: 23px 20px 0; }
h1 { font-size: 17.240px; line-height: 22px; }
h1 span { font-weight: normal; color: #687078; font-size: 17.900px; }
.card p { margin-top: 7px; font-size: 11.610px; line-height: 20px; color: #545b64; }
.card p a { font-size: 11.750px; }
.card p .more { font-size: 11.450px; }
.card a { color: #0073bb; }
.card p svg { display: inline-block; vertical-align: -3px; margin: 0 1px 0 2px; }
.btns { display: flex; flex-wrap: wrap; gap: 10px; margin-top: 10px; }
.btn svg { margin-right: 10px; }
.ico { padding-right: 5px; }
.w48 svg { margin: 0; }
.open svg { margin: 0 0 0 11px; }
.off { color: #aab7b8; border-color: #d5dbdb; }
.w48 { width: 48px; }
.w145 { width: 145px; }
.w127 { width: 127px; }
.w131 { width: 131px; }
.w99 { width: 99px; padding-left: 3px; }
.w86 { width: 86px; font-size: 13.200px; }
.w113 { width: 113px; font-size: 13.300px; }
.w112 { width: 112px; }
.wider { font-size: 13.900px; }
.up { background: #ec7211; border-color: #ec7211; color: #fff; }
.filter { display: flex; justify-content: space-between; margin-top: 14px; }
.find { width: 374px; height: 32px; border: 1px solid #aab7b8; border-radius: 2px; background: #fff; display: flex; align-items: center; padding-left: 7px; color: #687078; }
.find i { color: #aab7b8; margin-left: 9px; font-size: 13.900px; }
.pager { display: flex; align-items: center; height: 22px; }
.pager b { width: 50px; text-align: center; font-size: 12.800px; color: #16191f; }
.gear { margin-left: 16px; padding-left: 17px; height: 30px; border-left: 1px solid #eaeded; display: flex; align-items: center; }
.gear svg { margin-right: 2px; }

/* object table */
.row { display: grid; grid-template-columns: 55px 164px 108px 346px 103px 173px; height: 30px; background: #fff; border-top: 1px solid #eaeded; align-items: center; }
.row > div { padding-left: 20px; display: flex; align-items: center; font-size: 13.500px; }
.row > .d { padding-left: 19px; }
.row > .s { padding-left: 18px; }
.row svg { width: 14px; height: 14px; margin-right: 11px; }
.row .tall { height: 16px; }
.box { width: 14px; height: 14px; border: 1px solid #aab7b8; border-radius: 2px; background: #fff; margin-top: -2px; }
.row .date { font-size: 14px; }
.row .r { justify-content: flex-end; padding-right: 22px; font-size: 13.900px; }
.head { height: 43px; background: #fafafa; }
.head .box { margin-top: -3px; }
.head > div { height: 21px; font-weight: bold; font-size: 13.200px; color: #545b64; border-right: 1px solid #eaeded; justify-content: space-between; }
.head > div:last-child { border-right: 0; }
.head svg { width: 11px; height: 8px; margin: 0 18px 0 0; color: #879596; }
.head .sorted { color: #16191f; font-size: 12.800px; }
.head .sz svg { margin-right: 19px; }
.head .sz { font-size: 12.900px; }
.head .st { padding-left: 19px; }
.head .st svg { margin-right: 19px; }

.help { width: 40px; background: #fff; display: flex; justify-content: center; padding-top: 12px; color: #545b64; }

/* footer */
.foot { height: 29px; background: #232f3e; border-top: 1px solid #545b64; display: flex; align-items: center; padding-left: 20px; color: #fff; font-size: 11.670px; }
.fb { width: 76px; font-size: 11.460px; }
.lang { color: #aab7b8; }
.lang em { font-style: normal; color: #fff; }
.foot svg { margin-left: 3px; }
.copyr { margin-left: auto; width: 305px; }
.pv { width: 64px; }
.tm { width: 58px; }
.foot > span:last-child { width: 123px; font-size: 11.400px; }

/* dock */
.dock { height: 70px; background: #0e0e0e; display: flex; align-items: center; padding-left: 16px; }
.app { width: 64px; height: 64px; margin-right: 6px; border-radius: 12px; display: flex; align-items: center; justify-content: center; position: relative; }
.app svg { width: 48px; height: 48px; }
.sel { background: #3a3a3a; }
.dot { position: absolute; width: 6px; height: 6px; border-radius: 50%; background: #2f8583; left: 29px; bottom: 0; }
.dot.two { left: 33px; }
.dot:has(+ .two) { left: 24px; }
.dsep { width: 1px; height: 48px; background: #4a4a4a; margin: 0 7px 0 1px; }
.grid9 { display: grid; grid-template-columns: repeat(3, 6px); gap: 6px; margin-left: 165px; }
.grid9 i { width: 6px; height: 6px; border-radius: 1.500px; background: #f2f2f2; }
```
